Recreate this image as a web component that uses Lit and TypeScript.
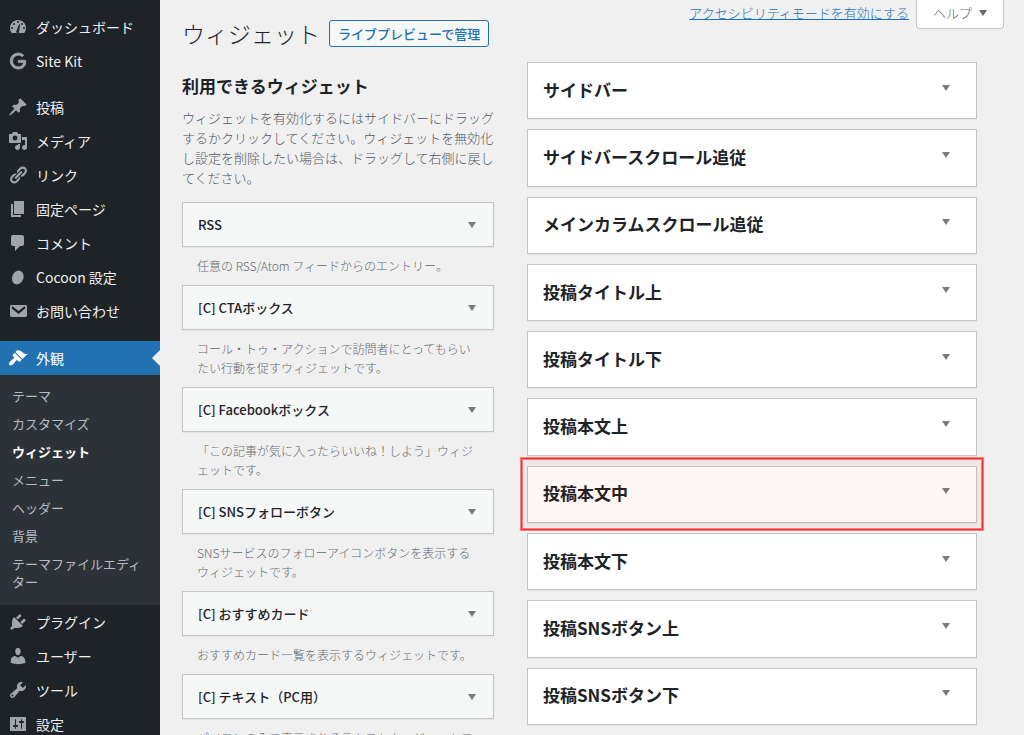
import { LitElement, html, css, svg, nothing } from "lit";
import type { TemplateResult } from "lit";
import { customElement, property } from "lit/decorators.js";
import { classMap } from "lit/directives/class-map.js";

interface MenuEntry {
  icon: string;
  label: string;
}

const GLYPHS: Record<string, TemplateResult> = {
  dashboard: svg`<path fill-rule="evenodd" d="M3.76 16h12.48A7.98 7.98 0 0 0 18 11c0-4.42-3.58-8-8-8s-8 3.58-8 8c0 1.89.66 3.63 1.76 5zM10 4a1 1 0 1 1 0 2 1 1 0 0 1 0-2zM6 6a1 1 0 1 1 0 2 1 1 0 0 1 0-2zm8 0a1 1 0 1 1 0 2 1 1 0 0 1 0-2zm-5.37 7.6l2.5-6.3.9.3-.9 6.6a1.5 1.5 0 1 1-2.5-.6zM4 10a1 1 0 1 1 0 2 1 1 0 0 1 0-2zm12 0a1 1 0 1 1 0 2 1 1 0 0 1 0-2z"/>`,
  google: svg`<path transform="translate(2 2) scale(.667)" stroke="currentColor" stroke-width="1.2" d="M12.48 10.92v3.28h7.84c-.24 1.84-.853 3.187-1.787 4.133-1.147 1.147-2.933 2.4-6.053 2.4-4.827 0-8.6-3.893-8.6-8.72s3.773-8.72 8.6-8.72c2.6 0 4.507 1.027 5.907 2.347l2.307-2.307C18.747 1.44 16.133 0 12.48 0 5.867 0 .307 5.387.307 12s5.56 12 12.173 12c3.573 0 6.267-1.173 8.373-3.36 2.16-2.16 2.84-5.213 2.84-7.667 0-.76-.053-1.467-.173-2.053H12.48z"/>`,
  pin: svg`<path d="M10.44 3.02l1.82-1.82 6.36 6.35-1.83 1.82c-1.05-.68-2.48-.57-3.41.36l-.75.75c-.92.93-1.04 2.35-.35 3.41l-1.83 1.82-2.41-2.41-2.8 2.79c-.42.42-3.38 2.71-3.8 2.29s1.86-3.39 2.28-3.81l2.79-2.79L4.1 9.37l1.83-1.82c1.05.69 2.48.57 3.4-.36l.75-.75c.93-.92 1.05-2.35.36-3.42z"/>`,
  media: svg`<path d="M13 11V4c0-.55-.45-1-1-1h-1.67L9 1H5L3.67 3H2c-.55 0-1 .45-1 1v7c0 .55.45 1 1 1h10c.55 0 1-.45 1-1zM7 4.5c1.38 0 2.5 1.12 2.5 2.5S8.38 9.5 7 9.5 4.5 8.38 4.5 7 5.62 4.5 7 4.5zM14 6h5v10.5c0 1.38-1.12 2.5-2.5 2.5S14 17.88 14 16.5s1.12-2.5 2.5-2.5c.17 0 .34.02.5.05V9h-3V6zm-4 8.05V13h2v3.5c0 1.38-1.12 2.5-2.5 2.5S7 17.88 7 16.5 8.12 14 9.5 14c.17 0 .34.02.5.05z"/>`,
  link: svg`<path d="M17.74 2.76c1.68 1.69 1.68 4.41 0 6.1l-1.53 1.52c-1.12 1.12-2.7 1.47-4.14 1.09l2.62-2.61.76-.77.76-.76c.84-.84.84-2.2 0-3.04-.84-.85-2.2-.85-3.04 0l-.77.76-3.38 3.38c-.37-1.44-.02-3.02 1.1-4.14l1.52-1.53c1.69-1.68 4.42-1.68 6.1 0zM8.59 13.43l5.34-5.34c.42-.42.42-1.1 0-1.52-.44-.43-1.13-.39-1.53 0l-5.33 5.34c-.42.42-.42 1.1 0 1.52.44.43 1.13.39 1.52 0zm-.76 2.29l4.14-4.15c.38 1.44.03 3.02-1.09 4.14l-1.52 1.53c-1.69 1.68-4.41 1.68-6.1 0-1.68-1.68-1.68-4.42 0-6.1l1.53-1.52c1.12-1.12 2.7-1.47 4.14-1.1l-4.14 4.15c-.85.84-.85 2.2 0 3.05.84.84 2.2.84 3.04 0z"/>`,
  page: svg`<path d="M6 15V2h10v13H6zm-1 1h8v2H3V5h2v11z"/>`,
  comment: svg`<path d="M5 2h9c1.1 0 2 .9 2 2v7c0 1.1-.9 2-2 2h-2l-5 5v-5H5c-1.1 0-2-.9-2-2V4c0-1.1.9-2 2-2z"/>`,
  cocoon: svg`<ellipse cx="10" cy="10.500" rx="5.6" ry="7.1" transform="rotate(22 10 10)"/>`,
  mail: svg`<path fill-rule="evenodd" d="M3.5 4h14c.8 0 1.5.6 1.5 1.400v9.200c0 .8-.7 1.400-1.500 1.400h-14c-.8 0-1.500-.6-1.500-1.400V5.400C2 4.600 2.700 4 3.500 4zM3.800 5.400v2l6.700 5.500 6.700-5.500v-2h-1l-5.700 4.700-5.700-4.700z"/>`,
  brush: svg`<path d="M14.48 11.06L7.41 3.99l1.5-1.5c.5-.56 2.3-.47 3.51.32 1.21.8 1.43 1.28 2.91 2.1 1.18.64 2.45 1.26 4.45.85zm-.71.71L6.7 4.7 4.93 6.47c-.39.39-.39 1.02 0 1.41l1.06 1.06c.39.39.39 1.03 0 1.42-.6.6-1.43 1.11-2.21 1.69-.35.26-.7.53-1.01.84C1.43 14.23.4 16.08 1.4 17.07c.99 1 2.84-.03 4.18-1.36.31-.31.58-.66.85-1.02.57-.78 1.08-1.61 1.69-2.21.39-.39 1.02-.39 1.41 0l1.06 1.06c.39.39 1.02.39 1.41 0z"/>`,
  plug: svg`<path d="M13.11 4.36L9.87 7.6 8 5.73l3.24-3.24c.35-.34 1.05-.2 1.56.32.52.51.66 1.21.31 1.55zm-8 1.77l.91-1.12 9.01 9.01-1.19.84c-.71.71-2.63 1.16-3.82 1.16H6.14L4.9 17.26c-.59.59-1.54.59-2.12 0-.59-.58-.59-1.53 0-2.12l1.24-1.24v-3.88c0-1.13.4-3.19 1.09-3.89zm7.26 3.97l3.24-3.24c.34-.35 1.04-.21 1.55.31.52.51.66 1.21.31 1.55l-3.24 3.25z"/>`,
  user: svg`<path d="M10 9.25c-2.27 0-2.73-3.44-2.73-3.44C7 4.02 7.82 2 9.97 2c2.16 0 2.98 2.02 2.71 3.81 0 0-.41 3.44-2.68 3.44zm0 2.57L12.72 10c2.39 0 4.52 2.33 4.52 4.53v2.49s-3.65 1.13-7.24 1.13c-3.65 0-7.24-1.13-7.24-1.13v-2.49c0-2.25 1.94-4.48 4.47-4.48z"/>`,
  wrench: svg`<path d="M16.68 9.77c-1.34 1.34-3.3 1.67-4.95.99l-5.41 6.52c-.99.99-2.59.99-3.58 0s-.99-2.59 0-3.57l6.52-5.42c-.68-1.65-.35-3.61.99-4.95 1.28-1.28 3.12-1.62 4.72-1.06l-2.89 2.89 2.82 2.82 2.86-2.87c.53 1.58.18 3.39-1.08 4.65zM3.81 16.21c.4.39 1.04.39 1.43 0 .4-.4.4-1.04 0-1.43-.39-.4-1.03-.4-1.43 0-.39.39-.39 1.03 0 1.43z"/>`,
  sliders: svg`<path d="M18 16V4c0-.55-.45-1-1-1H3c-.55 0-1 .45-1 1v12c0 .55.45 1 1 1h14c.55 0 1-.45 1-1zM8 11h1c.55 0 1 .45 1 1s-.45 1-1 1H8v1.500c0 .28-.22.5-.5.5s-.5-.22-.5-.5V13H6c-.55 0-1-.45-1-1s.45-1 1-1h1V5.500c0-.28.22-.5.5-.5s.5.22.5.5V11zm5-2h-1c-.55 0-1-.45-1-1s.45-1 1-1h1V5.500c0-.28.22-.5.5-.5s.5.22.5.5V7h1c.55 0 1 .45 1 1s-.45 1-1 1h-1v5.500c0 .28-.22.5-.5.5s-.5-.22-.5-.5V9z"/>`,
};

const reset = css`
  *,
  *::before,
  *::after {
    box-sizing: border-box;
  }
  h1,
  h2,
  h3,
  p,
  ul {
    margin: 0;
    padding: 0;
  }
  ul {
    list-style: none;
  }
  button {
    font: inherit;
    cursor: pointer;
  }
`;

const caret = html`<svg width="8" height="6" viewBox="0 0 8 6" fill="currentColor" aria-hidden="true">
  <path d="M0 0h8L4 6z" />
</svg>`;

@customElement("admin-menu")
export class AdminMenu extends LitElement {
  static styles = [
    reset,
    css`
      :host {
        display: block;
        background: #1d2327;
        padding-top: 10px;
        overflow: hidden;
      }
      .group + .group {
        margin-top: 12px;
      }
      .group:last-child {
        margin-top: 13px;
      }
      .item {
        display: flex;
        align-items: center;
        gap: 8px;
        height: 34px;
        padding: 0 8px;
        position: relative;
        font-size: 14px;
        line-height: 18px;
        color: #f0f0f1;
        text-decoration: none;
      }
      .icon {
        flex: none;
        width: 20px;
        height: 20px;
        fill: currentColor;
        color: #a0a5aa;
      }
      .current {
        background: #2271b1;
        color: #fff;
      }
      .current .icon {
        color: #fff;
      }
      .current::after {
        content: "";
        position: absolute;
        right: 0;
        top: 9px;
        border: 8px solid transparent;
        border-left: 0;
        border-right-color: #f0f0f1;
      }
      .submenu {
        background: #2c3338;
        padding: 7px 0 9px;
      }
      .sub {
        display: block;
        padding: 5px 12px;
        font-size: 13px;
        line-height: 18px;
        color: #b5bcc2;
        text-decoration: none;
      }
      .here {
        color: #fff;
        font-weight: 700;
      }
    `,
  ];

  private top: MenuEntry[] = [
    { icon: "dashboard", label: "ダッシュボード" },
    { icon: "google", label: "Site Kit" },
  ];
  private content: MenuEntry[] = [
    { icon: "pin", label: "投稿" },
    { icon: "media", label: "メディア" },
    { icon: "link", label: "リンク" },
    { icon: "page", label: "固定ページ" },
    { icon: "comment", label: "コメント" },
    { icon: "cocoon", label: "Cocoon 設定" },
    { icon: "mail", label: "お問い合わせ" },
  ];
  private appearance = [
    "テーマ",
    "カスタマイズ",
    "ウィジェット",
    "メニュー",
    "ヘッダー",
    "背景",
    "テーマファイルエディター",
  ];
  private system: MenuEntry[] = [
    { icon: "plug", label: "プラグイン" },
    { icon: "user", label: "ユーザー" },
    { icon: "wrench", label: "ツール" },
    { icon: "sliders", label: "設定" },
  ];

  private entry(e: MenuEntry, current = false) {
    return html`<a class=${classMap({ item: true, current })} href="#">
      <svg class="icon" viewBox="0 0 20 20" aria-hidden="true">${GLYPHS[e.icon]}</svg>
      <span>${e.label}</span>
    </a>`;
  }

  private list(entries: MenuEntry[]) {
    return entries.map((e) => html`<li>${this.entry(e)}</li>`);
  }

  render() {
    return html`<nav>
      <ul class="group">${this.list(this.top)}</ul>
      <ul class="group">${this.list(this.content)}</ul>
      <ul class="group">
        <li>
          ${this.entry({ icon: "brush", label: "外観" }, true)}
          <ul class="submenu">
            ${this.appearance.map(
              (s) => html`<li>
                <a class=${classMap({ sub: true, here: s === "ウィジェット" })} href="#">${s}</a>
              </li>`,
            )}
          </ul>
        </li>
        ${this.list(this.system)}
      </ul>
    </nav>`;
  }
}

@customElement("widget-card")
export class WidgetCard extends LitElement {
  @property() name = "";
  @property() description = "";

  static styles = [
    reset,
    css`
      :host {
        display: block;
      }
      .head {
        display: flex;
        align-items: center;
        justify-content: space-between;
        width: 100%;
        height: 45px;
        padding: 0 17px 0 15px;
        border: 1px solid #c3c4c7;
        background: #f6f7f7;
        box-shadow: 0 1px 1px rgba(0, 0, 0, 0.04);
        color: #787c82;
        text-align: left;
      }
      .name {
        font-size: 13px;
        font-weight: 500;
        line-height: 18px;
        color: #1d2327;
      }
      .text {
        padding: 9px 15px 10px;
        font-size: 12px;
        font-weight: 300;
        line-height: 19px;
        color: #646970;
      }
    `,
  ];

  render() {
    return html`
      <h3><button class="head" type="button"><span class="name">${this.name}</span>${caret}</button></h3>
      <p class="text">${this.description}</p>
    `;
  }
}

@customElement("widget-area")
export class WidgetArea extends LitElement {
  @property() name = "";
  @property({ type: Boolean }) marked = false;

  static styles = [
    reset,
    css`
      :host {
        display: grid;
        position: relative;
      }
      .title {
        display: grid;
      }
      .head {
        display: flex;
        align-items: center;
        justify-content: space-between;
        padding: 14px 26px 16px 15px;
        border: 1px solid #c3c4c7;
        background: #fff;
        box-shadow: 0 1px 1px rgba(0, 0, 0, 0.04);
        color: #787c82;
        text-align: left;
      }
      .name {
        font-size: 17px;
        font-weight: 700;
        line-height: 24px;
        color: #1d2327;
      }
      .toggle {
        display: flex;
        padding-bottom: 4px;
      }
      .marker {
        position: absolute;
        inset: -8px -6px -7px;
        border: 1px solid #ff2a2a;
        background: rgba(255, 0, 0, 0.035);
        box-shadow:
          0 0 0 1px rgba(255, 40, 40, 0.55),
          inset 0 0 0 1px rgba(255, 40, 40, 0.55);
        pointer-events: none;
      }
    `,
  ];

  render() {
    return html`
      <h2 class="title">
        <button class="head" type="button">
          <span class="name">${this.name}</span><span class="toggle">${caret}</span>
        </button>
      </h2>
      ${this.marked ? html`<div class="marker"></div>` : nothing}
    `;
  }
}

@customElement("app-root")
export class AppRoot extends LitElement {
  static styles = [
    reset,
    css`
      :host {
        display: grid;
        grid-template-columns: 160px minmax(0, 1fr);
        height: 100vh;
        overflow: hidden;
        background: #f0f0f1;
        color: #3c434a;
        font-family: "Noto Sans CJK JP", "Noto Sans", sans-serif;
        font-size: 13px;
        line-height: 20px;
        line-break: normal;
      }
      .main {
        display: grid;
        grid-template-rows: auto minmax(0, 1fr);
        min-height: 0;
      }
      .header {
        display: flex;
        justify-content: space-between;
        align-items: flex-start;
        height: 62px;
        padding: 0 20px 0 22px;
      }
      .heading {
        display: flex;
        align-items: center;
        gap: 9px;
        padding-top: 16px;
      }
      .title {
        font-size: 23px;
        font-weight: 300;
        line-height: 35px;
        color: #1d2327;
      }
      .preview {
        padding: 0 8px;
        border: 1px solid #2271b1;
        border-radius: 3px;
        background: #f6f7f7;
        color: #2271b1;
        font-weight: 500;
        line-height: 25px;
        text-decoration: none;
      }
      .meta {
        display: flex;
        align-items: flex-start;
        gap: 7px;
      }
      .access {
        padding-top: 3px;
        font-weight: 300;
        color: #2271b1;
      }
      .help {
        display: flex;
        align-items: center;
        gap: 7px;
        height: 29px;
        padding: 0 16px 2px;
        border: 1px solid #c3c4c7;
        border-top: 0;
        border-radius: 0 0 4px 4px;
        background: #fff;
        font-weight: 300;
        color: #646970;
      }
      .columns {
        display: grid;
        grid-template-columns: minmax(0, 52fr) minmax(0, 75fr);
        gap: 33px;
        min-height: 0;
        padding: 0 47px 0 22px;
      }
      .available {
        min-height: 0;
        padding-top: 12px;
      }
      .subtitle {
        font-size: 17px;
        line-height: 24px;
        color: #1d2327;
      }
      .intro {
        padding: 10px 0 14px;
        font-weight: 300;
        color: #50575e;
      }
      .areas {
        display: grid;
        grid-auto-rows: 1fr;
        gap: 10px;
        padding-bottom: 10px;
      }
    `,
  ];

  private widgets = [
    ["RSS", "任意の RSS/Atom フィードからのエントリー。"],
    ["[C] CTAボックス", "コール・トゥ・アクションで訪問者にとってもらいたい行動を促すウィジェットです。"],
    ["[C] Facebookボックス", "「この記事が気に入ったらいいね！しよう」ウィジェットです。"],
    ["[C] SNSフォローボタン", "SNSサービスのフォローアイコンボタンを表示するウィジェットです。"],
    ["[C] おすすめカード", "おすすめカード一覧を表示するウィジェットです。"],
    ["[C] テキスト（PC用）", "パソコンのみで表示されるテキストウィジェットです。"],
  ];

  private areas = [
    "サイドバー",
    "サイドバースクロール追従",
    "メインカラムスクロール追従",
    "投稿タイトル上",
    "投稿タイトル下",
    "投稿本文上",
    "投稿本文中",
    "投稿本文下",
    "投稿SNSボタン上",
    "投稿SNSボタン下",
  ];

  render() {
    return html`
      <admin-menu lang="ja"></admin-menu>
      <main class="main" lang="ja">
        <header class="header">
          <div class="heading">
            <h1 class="title">ウィジェット</h1>
            <a class="preview" href="#">ライブプレビューで管理</a>
          </div>
          <div class="meta">
            <a class="access" href="#">アクセシビリティモードを有効にする</a>
            <button class="help" type="button">ヘルプ${caret}</button>
          </div>
        </header>
        <div class="columns">
          <section class="available">
            <h2 class="subtitle">利用できるウィジェット</h2>
            <p class="intro">
              ウィジェットを有効化するにはサイドバーにドラッグするかクリックしてください。ウィジェットを無効化し設定を削除したい場合は、ドラッグして右側に戻してください。
            </p>
            ${this.widgets.map(([n, d]) => html`<widget-card .name=${n} .description=${d}></widget-card>`)}
          </section>
          <section class="areas">
            ${this.areas.map(
              (n) => html`<widget-area .name=${n} .marked=${n === "投稿本文中"}></widget-area>`,
            )}
          </section>
        </div>
      </main>
    `;
  }
}
